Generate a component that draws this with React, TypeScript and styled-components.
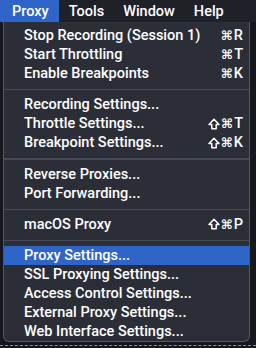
import React from 'react';
import styled, { createGlobalStyle } from 'styled-components';

const GlobalStyle = createGlobalStyle`
  html, body {
    margin: 0;
    padding: 0;
    background: #16181d;
  }
  body {
    font-family: Roboto, "Liberation Sans", Arial, sans-serif;
    -webkit-font-smoothing: antialiased;
  }
`;

type Item = { label: string; cmd?: string; shift?: boolean; active?: boolean };

const groups: Item[][] = [
  [
    { label: 'Stop Recording (Session 1)', cmd: 'R' },
    { label: 'Start Throttling', cmd: 'T' },
    { label: 'Enable Breakpoints', cmd: 'K' },
  ],
  [
    { label: 'Recording Settings...' },
    { label: 'Throttle Settings...', cmd: 'T', shift: true },
    { label: 'Breakpoint Settings...', cmd: 'K', shift: true },
  ],
  [{ label: 'Reverse Proxies...' }, { label: 'Port Forwarding...' }],
  [{ label: 'macOS Proxy', cmd: 'P', shift: true }],
  [
    { label: 'Proxy Settings...', active: true },
    { label: 'SSL Proxying Settings...' },
    { label: 'Access Control Settings...' },
    { label: 'External Proxy Settings...' },
    { label: 'Web Interface Settings...' },
  ],
];

const ShiftIcon = () => (
  <svg width="12" height="12" viewBox="0 0 12 12" fill="none">
    <path
      d="M6 1.2 L11 6.4 H8.2 V10.8 H3.8 V6.4 H1 Z"
      stroke="#ffffff"
      strokeWidth="1.5"
      strokeLinejoin="round"
    />
  </svg>
);

const App: React.FC = () => {
  return (
    <>
      <GlobalStyle />
      <Screen>
        <MenuBar>
          <BarItem $open>Proxy</BarItem>
          <BarItem>Tools</BarItem>
          <BarItem>Window</BarItem>
          <BarItem>Help</BarItem>
        </MenuBar>
        <Dropdown>
          {groups.map((group, gi) => (
            <React.Fragment key={gi}>
              {gi > 0 && <Separator />}
              <Group>
                {group.map((item) => (
                  <Row key={item.label} $active={item.active}>
                    <Label>{item.label}</Label>
                    {item.cmd && (
                      <Keys>
                        {item.shift && <ShiftIcon />}
                        <Cmd>⌘</Cmd>
                        <KeyLetter>{item.cmd}</KeyLetter>
                      </Keys>
                    )}
                  </Row>
                ))}
              </Group>
            </React.Fragment>
          ))}
        </Dropdown>
        <Dashes />
      </Screen>
    </>
  );
};

export default App;

const Screen = styled.div`
  width: 256px;
  height: 348px;
  overflow: hidden;
  background: #16181d;
  display: flex;
  flex-direction: column;
`;

const MenuBar = styled.div`
  display: flex;
  align-items: stretch;
  height: 22px;
  background: #1f2128;
`;

const BarItem = styled.div<{ $open?: boolean }>`
  display: flex;
  align-items: center;
  padding: 0 9px 0 10px;
  font-size: 14.5px;
  font-weight: 500;
  color: #ffffff;
  background: ${({ $open }) => ($open ? '#2f64c8' : 'transparent')};
  &:first-child {
    padding: 0 10px 0 12px;
  }
`;

const Dropdown = styled.div`
  margin-left: 3px;
  width: 247px;
  height: 320px;
  box-sizing: border-box;
  background: #2b2e37;
  border: 1px solid #545862;
  border-top: none;
  border-radius: 0 0 6px 6px;
  padding-top: 4px;
  display: flex;
  flex-direction: column;
`;

const Group = styled.div`
  display: flex;
  flex-direction: column;
`;

const Separator = styled.div`
  height: 2px;
  margin: 6px 0 5px;
  background: #454953;
`;

const Row = styled.div<{ $active?: boolean }>`
  display: flex;
  align-items: center;
  justify-content: space-between;
  height: 19px;
  padding: 0 6px 0 20px;
  background: ${({ $active }) => ($active ? '#2f64c8' : 'transparent')};
  color: #ffffff;
  font-size: 14.5px;
  font-weight: 500;
`;

const Label = styled.span`
  white-space: nowrap;
`;

const Keys = styled.span`
  display: flex;
  align-items: center;
  gap: 1px;
  white-space: nowrap;
`;

const Cmd = styled.span`
  font-family: "DejaVu Sans", sans-serif;
  font-size: 13px;
  font-weight: 700;
`;

const KeyLetter = styled.span`
  font-size: 14.5px;
  font-weight: 500;
`;

const Dashes = styled.div`
  margin-top: 3px;
  height: 1px;
  border-top: 1px dashed #8a8e96;
`;
